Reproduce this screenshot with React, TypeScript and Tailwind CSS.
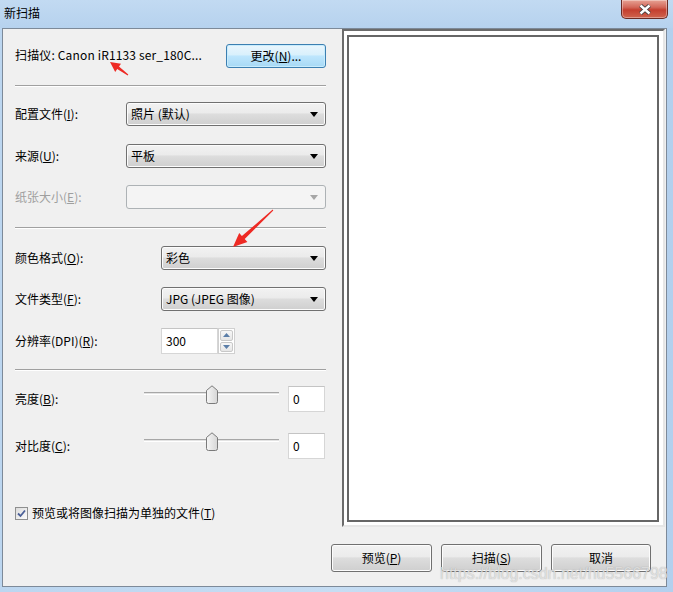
import clsx from "clsx";
import type { ReactNode } from "react";

const btnFill =
  "bg-[linear-gradient(#f2f2f2,#ebebeb_45%,#dddddd_50%,#cfcfcf)] border border-[#707070] rounded-[3px] shadow-[inset_0_0_0_1px_#fcfcfc]";

function Combo({ value, disabled }: { value?: string; disabled?: boolean }) {
  return (
    <div
      className={clsx(
        "flex h-full flex-1 items-center pl-[4px] pr-[7px]",
        disabled
          ? "rounded-[3px] border border-[#adb2b5] bg-[#f4f4f4]"
          : btnFill
      )}
    >
      <span className="flex-1 leading-none">{value}</span>
      <svg width="8" height="5" viewBox="0 0 8 5">
        <path d="M0 0h8L4 5z" fill={disabled ? "#a6a6a6" : "#000"} />
      </svg>
    </div>
  );
}

function Row({
  label,
  lw,
  h,
  mt,
  disabled,
  children,
}: {
  label: ReactNode;
  lw: string;
  h: string;
  mt: string;
  disabled?: boolean;
  children: ReactNode;
}) {
  return (
    <div className={clsx("flex items-center", h, mt)}>
      <span className={clsx("shrink-0", lw, disabled && "text-[#9f9f9f]")}>
        {label}
      </span>
      {children}
    </div>
  );
}

function Separator({ mt }: { mt: string }) {
  return (
    <div
      className={clsx(
        "mr-[16px] h-[2px] border-t border-b border-t-[#a0a0a0] border-b-white",
        mt
      )}
    />
  );
}

function Slider({ label, mt }: { label: ReactNode; mt: string }) {
  return (
    <div className={clsx("flex h-[26px] items-center", mt)}>
      <span className="w-[129px] shrink-0">{label}</span>
      <div className="relative h-[20px] w-[135px] self-start">
        <div className="mt-[6px] h-[3px] border-t border-b border-t-[#a7a7a7] border-b-white bg-[#e3e3e3]" />
        <svg
          className="absolute left-[62px] top-[-1px]"
          width="12"
          height="19"
          viewBox="0 0 12 19"
        >
          <defs>
            <linearGradient id="th" x1="0" x2="1">
              <stop offset="0" stopColor="#f6f6f6" />
              <stop offset="1" stopColor="#d6d6d6" />
            </linearGradient>
          </defs>
          <path
            d="M0.5 5.5 L6 0.8 L11.5 5.5 V16.5 Q11.5 18.5 9.5 18.5 H2.5 Q0.5 18.5 0.5 16.5 Z"
            fill="url(#th)"
            stroke="#7a7a7a"
          />
        </svg>
      </div>
      <div className="ml-[9px] flex h-[26px] w-[37px] items-center border border-[#d6d6d6] border-t-[#c4c4c4] bg-white pl-[4px]">
        0
      </div>
    </div>
  );
}

function Button({
  children,
  focused,
  className,
}: {
  children: ReactNode;
  focused?: boolean;
  className?: string;
}) {
  return (
    <div
      className={clsx(
        "flex items-center justify-center",
        focused
          ? "rounded-[3px] border border-[#3c7fb1] bg-[linear-gradient(#eaf6fd,#d9f0fc_45%,#bee6fd_50%,#a7d9f5)] shadow-[inset_0_0_0_1px_#c8ecfd]"
          : btnFill,
        className
      )}
    >
      {children}
    </div>
  );
}

export default function App() {
  return (
    <div className="relative flex h-[592px] w-[673px] flex-col overflow-hidden bg-[linear-gradient(90deg,#bcd6f0,#c6ddf3_50%,#b3d0ee)] font-['Microsoft_YaHei','Noto_Sans_CJK_SC',sans-serif] text-[12px] text-black">
      {/* title bar */}
      <div className="relative flex h-[28px] items-center bg-[linear-gradient(#c2daf2,#b6d2ee)] pl-[4px]">
        <span className="mt-[-2px]">新扫描</span>
        <div className="absolute right-[5px] top-0 flex h-[19px] w-[47px] items-center justify-center rounded-b-[5px] border border-t-0 border-[#6b2b24] bg-[linear-gradient(#e7a294,#d3685a_40%,#c43f2f_55%,#d0644e)] shadow-[inset_0_0_0_1px_rgba(255,255,255,0.35)]">
          <svg width="14" height="11" viewBox="0 0 14 11">
            <path d="M2.5 1.5L11.5 9.5M11.5 1.5L2.5 9.5" stroke="#3d3d3d" strokeWidth="4.2" />
            <path d="M2.5 1.5L11.5 9.5M11.5 1.5L2.5 9.5" stroke="#fff" strokeWidth="2.4" />
          </svg>
        </div>
      </div>

      {/* client area */}
      <div className="mb-[5px] ml-[2px] mr-[6px] flex flex-1 flex-col border border-[#7d8a99] bg-[#f0f0f0]">
        <div className="flex h-[498px]">
          {/* left settings */}
          <div className="flex w-[339px] flex-col pl-[12px]">
            <div className="mr-[16px] mt-[15px] flex h-[24px] items-center justify-between">
              <span className="mt-[-2px] tracking-[0.15px]">扫描仪: Canon iR1133 ser_180C...</span>
              <Button focused className="h-[24px] w-[100px]">
                更改(<u>N</u>)...
              </Button>
            </div>
            <Separator mt="mt-[17px]" />

            <div className="mr-[16px] flex flex-col">
              <Row label={<>配置文件(<u>I</u>):</>} lw="w-[111px]" h="h-[24px]" mt="mt-[15px]">
                <Combo value="照片 (默认)" />
              </Row>
              <Row label={<>来源(<u>U</u>):</>} lw="w-[111px]" h="h-[24px]" mt="mt-[18px]">
                <Combo value="平板" />
              </Row>
              <Row label={<>纸张大小(<u>E</u>):</>} lw="w-[111px]" h="h-[24px]" mt="mt-[17px]" disabled>
                <Combo disabled />
              </Row>
            </div>
            <Separator mt="mt-[18px]" />

            <div className="mr-[16px] flex flex-col">
              <Row label={<>颜色格式(<u>O</u>):</>} lw="w-[146px]" h="h-[24px]" mt="mt-[17px]">
                <Combo value="彩色" />
              </Row>
              <Row label={<>文件类型(<u>F</u>):</>} lw="w-[146px]" h="h-[24px]" mt="mt-[17px]">
                <Combo value="JPG (JPEG 图像)" />
              </Row>
              <Row label={<>分辨率(DPI)(<u>R</u>):</>} lw="w-[146px]" h="h-[26px]" mt="mt-[17px]">
                <div className="flex h-full w-[57px] items-center border border-[#d6d6d6] border-t-[#c4c4c4] bg-white pl-[4px]">
                  300
                </div>
                <div className="flex h-full w-[17px] flex-col gap-[1px] border border-[#d0d0d0] bg-white p-[1px]">
                  <div className="flex flex-1 items-center justify-center rounded-[2px] border border-[#c8c8c8] bg-[linear-gradient(#f7f7f7,#e6e6e6)]">
                    <svg width="7" height="4" viewBox="0 0 7 4">
                      <path d="M0 4h7L3.5 0z" fill="#5b7ea8" />
                    </svg>
                  </div>
                  <div className="flex flex-1 items-center justify-center rounded-[2px] border border-[#c8c8c8] bg-[linear-gradient(#f7f7f7,#e6e6e6)]">
                    <svg width="7" height="4" viewBox="0 0 7 4">
                      <path d="M0 0h7L3.5 4z" fill="#5b7ea8" />
                    </svg>
                  </div>
                </div>
              </Row>
            </div>
            <Separator mt="mt-[15px]" />

            <Slider label={<>亮度(<u>B</u>):</>} mt="mt-[15px]" />
            <Slider label={<>对比度(<u>C</u>):</>} mt="mt-[21px]" />

            <div className="mt-[45px] flex items-center gap-[4px]">
              <div className="flex h-[13px] w-[13px] items-center justify-center border border-[#8e8f8f] bg-[linear-gradient(135deg,#dcdcdc,#fbfbfb)]">
                <svg width="9" height="9" viewBox="0 0 9 9">
                  <path d="M1 4.5L3.5 7L8 1.5" fill="none" stroke="#4a5f97" strokeWidth="1.8" />
                </svg>
              </div>
              <span>
                预览或将图像扫描为单独的文件(<u>T</u>)
              </span>
            </div>
          </div>

          {/* preview */}
          <div className="flex w-[323px] border-2 border-b-[#e6e6e6] border-l-[#6b6b6b] border-r-[#e6e6e6] border-t-[#6b6b6b] bg-white pb-[3px] pl-[3px] pr-[4px] pt-[4px]">
            <div className="flex-1 border-2 border-[#666666] bg-white" />
          </div>
        </div>

        <div className="mt-[17px] flex justify-end gap-[9px] pr-[15px]">
          <Button className="h-[28px] w-[101px]">
            预览(<u>P</u>)
          </Button>
          <Button className="h-[28px] w-[101px]">
            扫描(<u>S</u>)
          </Button>
          <Button className="h-[28px] w-[100px]">取消</Button>
        </div>
      </div>

      {/* watermark */}
      <span className="pointer-events-none absolute left-[440px] top-[562px] font-['Liberation_Sans',sans-serif] text-[16px] text-[rgba(235,235,235,0.8)] [text-shadow:0_0_1px_rgba(120,120,120,0.6)]">
        https://blog.csdn.net/hu5566798
      </span>

      {/* red annotation arrows */}
      <svg className="pointer-events-none absolute inset-0" width="673" height="592">
        <polygon
          points="128.3,74.6 119,66.6 121,63.8 110,62 115.2,71.9 117.2,69.1 127.7,75.4"
          fill="#ee2a24"
        />
        <polygon
          points="273.3,210.4 244.7,239 247.4,241.9 233,247 239.2,233.1 241.9,236 272.7,209.6"
          fill="#ee2a24"
        />
      </svg>
    </div>
  );
}
